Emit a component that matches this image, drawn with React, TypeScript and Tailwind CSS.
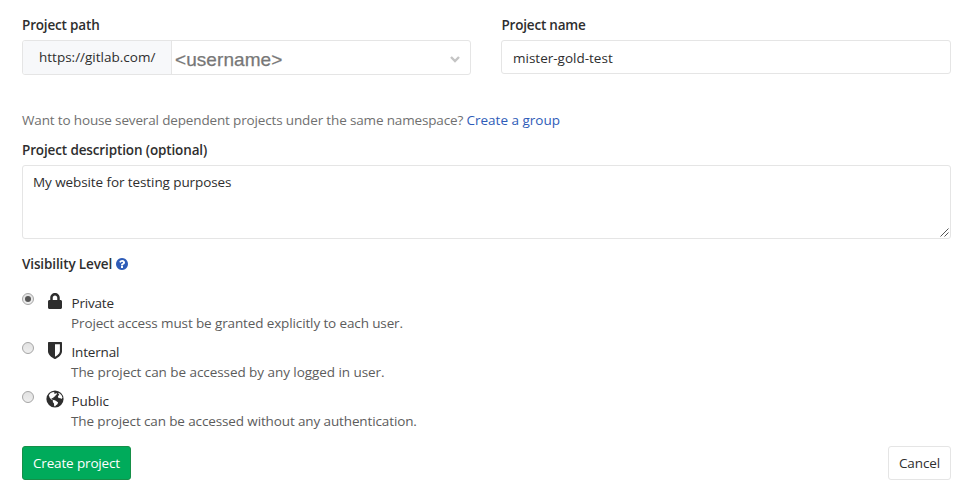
import React from "react";
import { FaLock } from "react-icons/fa";

type Level = { name: string; text: string; nameCls: string; textCls: string; icon: React.ReactNode };

const ShieldIcon = () => (
  <svg viewBox="256 128 1280 1536" className="h-[17px] w-[14px] shrink-0" preserveAspectRatio="none" fill="currentColor">
    <path d="M1344 960v-640h-448v1137q119-63 213-137 235-184 235-360zm192-768v768q0 86-33.5 170.5t-83 150-118 127.5-126.5 103-121 77.5-89.5 49.5-42.5 20q-12 6-26 6t-26-6q-16-7-42.5-20t-89.5-49.5-121-77.5-126.5-103-118-127.5-83-150-33.5-170.5v-768q0-26 19-45t45-19h1152q26 0 45 19t19 45z" />
  </svg>
);

const GlobeIcon = () => (
  <svg viewBox="0 0 18 18" className="size-[18px] shrink-0">
    <circle cx="9" cy="9" r="8.6" fill="#2e2e2e" />
    <path fill="#fff" d="M2.8 5.2 4.6 3l2.6-1.1 1.4.5-.6 1 1.3.4.9-.9 1 1.1-1.3.9-.8 1.3-1.6 1-.4 1.1-1.1-.2-.6.8 1.1.8 1.2.3 1.2.2 2 1.3 1.2 1-.7 1.8-1.4 1-1 1.1-.8-.5-.2-2.3-1.2-1.6.2-1.4-1.8-1.2-1.5-1.6-.8-2.2z" />
    <path fill="#fff" d="m12 2.7 1.9.8 1.8 2.1.8 2.2-1.2 1.1-1.2-.9-1.2.2-1-1.1.3-1.4 1.1-.7z" />
  </svg>
);

const HelpIcon = () => (
  <svg viewBox="128 128 1536 1536" className="ml-1 size-[12px]" fill="#2e5cb8">
    <path d="M1024 1376v-192q0-14-9-23t-23-9h-192q-14 0-23 9t-9 23v192q0 14 9 23t23 9h192q14 0 23-9t9-23zm256-672q0-88-55.5-163t-138.5-116-170-41q-243 0-371 213-15 24 8 42l132 100q7 6 19 6 16 0 25-12 53-68 86-92 34-24 86-24 48 0 85.5 26t37.5 59q0 38-20 61t-68 45q-63 28-115.5 86.5t-52.5 125.5v36q0 14 9 23t23 9h192q14 0 23-9t9-23q0-19 21.5-49.5t54.5-49.5q32-18 49-28.5t46-35 44.5-48 28-60.5 12.5-81zm384 192q0 209-103 385.5t-279.5 279.5-385.5 103-385.5-103-279.5-279.5-103-385.5 103-385.5 279.5-279.5 385.5-103 385.5 103 279.5 279.5 103 385.5z" />
  </svg>
);

const levels: Level[] = [
  { name: "Private", text: "Project access must be granted explicitly to each user.", nameCls: "tracking-[-0.2px]", textCls: "tracking-[-0.125px]", icon: <FaLock className="mb-px h-[16px] w-[14px] shrink-0" /> },
  { name: "Internal", text: "The project can be accessed by any logged in user.", nameCls: "tracking-[-0.18px]", textCls: "tracking-[-0.06px]", icon: <ShieldIcon /> },
  { name: "Public", text: "The project can be accessed without any authentication.", nameCls: "tracking-[-0.1px]", textCls: "tracking-[-0.125px]", icon: <GlobeIcon /> },
];

export default function App() {
  const [selected, setSelected] = React.useState(0);
  return (
    <main className="h-[498px] w-[972px] overflow-hidden bg-white pr-[21px] pl-[22px] pt-[15px] font-['Open_Sans',sans-serif] text-[13.5px] leading-5 text-[#2e2e2e]">
      <div className="flex gap-[30px]">
        <div className="w-[449px]">
          <div className="font-semibold tracking-[-0.17px]">Project path</div>
          <div className="mt-[5px] flex h-[35px] overflow-hidden rounded-[3px] border border-[#e5e5e5]">
            <div className="w-[149px] border-r border-[#e5e5e5] bg-[#f7f8fa] pt-[6px] pl-4">https://gitlab.com/</div>
            <div className="flex flex-1 items-center justify-between pr-[10px] pl-[3px]">
              <span className="pt-1 font-['Liberation_Sans',sans-serif] text-[19px] tracking-[0.07px] text-[#777] [-webkit-text-stroke:0.25px_#777]">&lt;username&gt;</span>
              <svg viewBox="0 0 10 7" className="mt-1 h-[7px] w-[10px]" fill="none" stroke="#c4c4c4" strokeWidth="2.4"><path d="m1 1 4 4 4-4" /></svg>
            </div>
          </div>
        </div>
        <div className="w-[450px]">
          <div className="pl-[0.5px] font-semibold tracking-[-0.2px]">Project name</div>
          <div className="mt-[5px] h-[34px] rounded-[3px] border border-[#e5e5e5] pt-[7px] pl-[11px]">mister-gold-test</div>
        </div>
      </div>
      <div className="mt-[35px] whitespace-nowrap text-[#707070]">
        <span className="tracking-[-0.15px]">Want to house several dependent projects under the same namespace? </span><a className="text-[#2e5cb8]">Create a group</a>
      </div>
      <div className="mt-[10px] font-semibold tracking-[-0.13px]">Project description (optional)</div>
      <div className="mt-[5px] flex h-[74px] justify-between rounded-[3px] border border-[#e5e5e5] pt-[6px] pr-px pb-px pl-[10px]">
        <span className="tracking-[-0.09px]">My website for testing purposes</span>
        <svg viewBox="0 0 9 9" className="size-[9px] self-end" stroke="#555" strokeWidth="1"><path d="M0.5 8.5 8.5.5M4.5 8.5l4-4" /></svg>
      </div>
      <div className="mt-[15px] flex items-center font-semibold"><span className="tracking-[-0.13px]">Visibility Level</span><HelpIcon /></div>
      <div className="mt-[19px]">
        {levels.map((level, i) => (
          <div key={level.name} className="flex h-[49px] cursor-pointer" onClick={() => setSelected(i)}>
            <div className="flex size-[12px] items-center justify-center rounded-full border border-[#a5a5a5] bg-linear-to-b from-[#e2e2e2] to-[#eee]">
              {selected === i && <div className="size-[6px] rounded-full bg-[#555]" />}
            </div>
            <div className="ml-[12px] flex h-[16px] w-[18px] items-center justify-center">{level.icon}</div>
            <div className="ml-[7px] whitespace-nowrap">
              <div className={level.nameCls}><span className="ml-[0.5px]">{level.name}</span></div>
              <div className="text-[#5c5c5c]"><span className={level.textCls}>{level.text}</span></div>
            </div>
          </div>
        ))}
      </div>
      <div className="mt-[6px] flex justify-between">
        <button className="h-[34px] w-[109px] rounded-[3px] border border-[#168f48] bg-[#00ab5b] tracking-[-0.15px] whitespace-nowrap text-white">Create project</button>
        <button className="h-[34px] w-[63px] rounded-[3px] border border-[#e5e5e5] bg-white tracking-[-0.1px]">Cancel</button>
      </div>
    </main>
  );
}
